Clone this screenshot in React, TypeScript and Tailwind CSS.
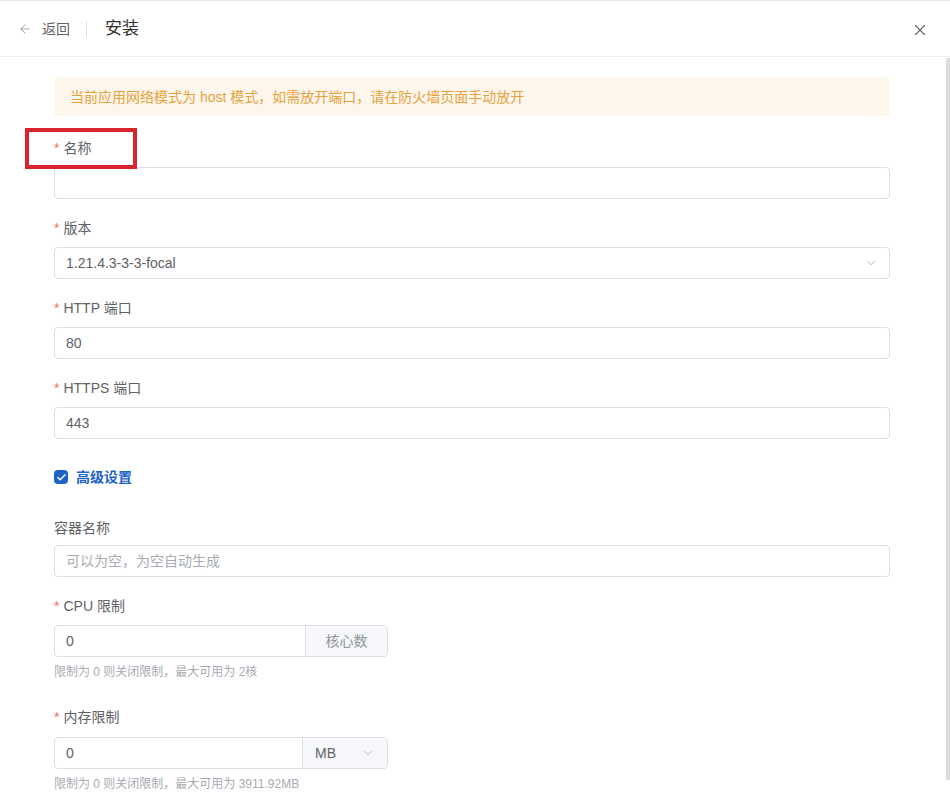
import { ArrowLeft, X, ChevronDown, Check } from 'lucide-react';

const FONT = { fontFamily: '"Liberation Sans", "Noto Sans CJK SC", sans-serif' };

function Label({ text, required = true, gap = 'mb-2' }: { text: string; required?: boolean; gap?: string }) {
    return (
        <div className={`h-[22px] leading-[22px] text-sm text-[#606266] flex items-center ${gap}`}>
            {required && <span className="text-[#f56c6c] mr-1 text-sm">*</span>}
            {text}
        </div>
    );
}

function Input({ value, placeholder }: { value?: string; placeholder?: string }) {
    return (
        <div className="h-8 border border-[#dcdfe6] rounded flex items-center px-[11px] text-sm bg-white">
            {value ? (
                <span className="text-[#606266]">{value}</span>
            ) : (
                <span className="text-[#a8abb2]">{placeholder}</span>
            )}
        </div>
    );
}

export default function App() {
    return (
        <div className="relative w-[950px] h-[808px] bg-white overflow-hidden" style={FONT}>
            {/* Header */}
            <div className="h-[57px] border-t border-t-[#e4e7ed] border-b border-b-[#ebeef5] flex items-center pl-[18px] pr-[22px]">
                <div className="flex items-center text-sm text-[#606266]">
                    <ArrowLeft size={14} strokeWidth={1.5} className="text-[#909399]" />
                    <span className="ml-[10px]">返回</span>
                </div>
                <div className="w-px h-4 bg-[#dcdfe6] ml-4 mr-[18px]" />
                <span className="text-[17px] text-[#303133]">安装</span>
                <X size={18} strokeWidth={1.5} className="ml-auto -mr-px mt-0.5 text-[#606266]" />
            </div>

            {/* Body */}
            <div className="pl-[54px] pr-[60px] pt-5">
                <div className="h-[39px] bg-[#fdf6ec] rounded flex items-center px-4 text-sm text-[#e6a23c]">
                    当前应用网络模式为 host 模式，如需放开端口，请在防火墙页面手动放开
                </div>

                <div className="mt-[21px]">
                    <Label text="名称" />
                    <Input />
                </div>

                <div className="mt-[18px]">
                    <Label text="版本" />
                    <div className="h-8 border border-[#dcdfe6] rounded flex items-center px-[11px] text-sm text-[#606266]">
                        <span>1.21.4.3-3-3-focal</span>
                        <ChevronDown size={14} strokeWidth={1.5} className="ml-auto text-[#a8abb2]" />
                    </div>
                </div>

                <div className="mt-[18px]">
                    <Label text="HTTP 端口" />
                    <Input value="80" />
                </div>

                <div className="mt-[18px]">
                    <Label text="HTTPS 端口" />
                    <Input value="443" />
                </div>

                <div className="mt-[27px] h-[22px] flex items-center">
                    <div className="w-[14px] h-[14px] rounded-sm bg-[#1d64c8] flex items-center justify-center">
                        <Check size={11} strokeWidth={3} className="text-white" />
                    </div>
                    <span className="ml-2 text-sm font-bold text-[#1d64c8]">高级设置</span>
                </div>

                <div className="mt-[29px]">
                    <Label text="容器名称" required={false} gap="mb-[6px]" />
                    <Input placeholder="可以为空，为空自动生成" />
                </div>

                <div className="mt-[18px]">
                    <Label text="CPU 限制" />
                    <div className="w-[334px] h-8 border border-[#dcdfe6] rounded flex text-sm">
                        <div className="flex-1 flex items-center px-[11px] text-[#606266]">0</div>
                        <div className="w-[82px] bg-[#f5f7fa] border-l border-[#dcdfe6] rounded-r flex items-center justify-center text-[#909399]">
                            核心数
                        </div>
                    </div>
                    <div className="mt-[7px] text-xs text-[#a8abb2] leading-4">限制为 0 则关闭限制，最大可用为 2核</div>
                </div>

                <div className="mt-[26px]">
                    <Label text="内存限制" gap="mb-[9px]" />
                    <div className="w-[334px] h-8 border border-[#dcdfe6] rounded flex text-sm">
                        <div className="flex-1 flex items-center px-[11px] text-[#606266]">0</div>
                        <div className="w-[85px] bg-[#f5f7fa] border-l border-[#dcdfe6] rounded-r flex items-center pl-[12px] pr-[12px] text-[#606266]">
                            <span>MB</span>
                            <ChevronDown size={14} strokeWidth={1.5} className="ml-auto text-[#a8abb2]" />
                        </div>
                    </div>
                    <div className="mt-[7px] text-xs text-[#a8abb2] leading-4">限制为 0 则关闭限制，最大可用为 3911.92MB</div>
                </div>
            </div>

            {/* Scrollbar thumb */}
            <div className="absolute right-0 top-[58px] w-[4px] h-[722px] bg-[#dcdcdc]" />

            {/* Annotation box */}
            <div className="absolute left-[25px] top-[128px] w-[112px] h-[41px] border-4 border-[#d9232e]" />
        </div>
    );
}
